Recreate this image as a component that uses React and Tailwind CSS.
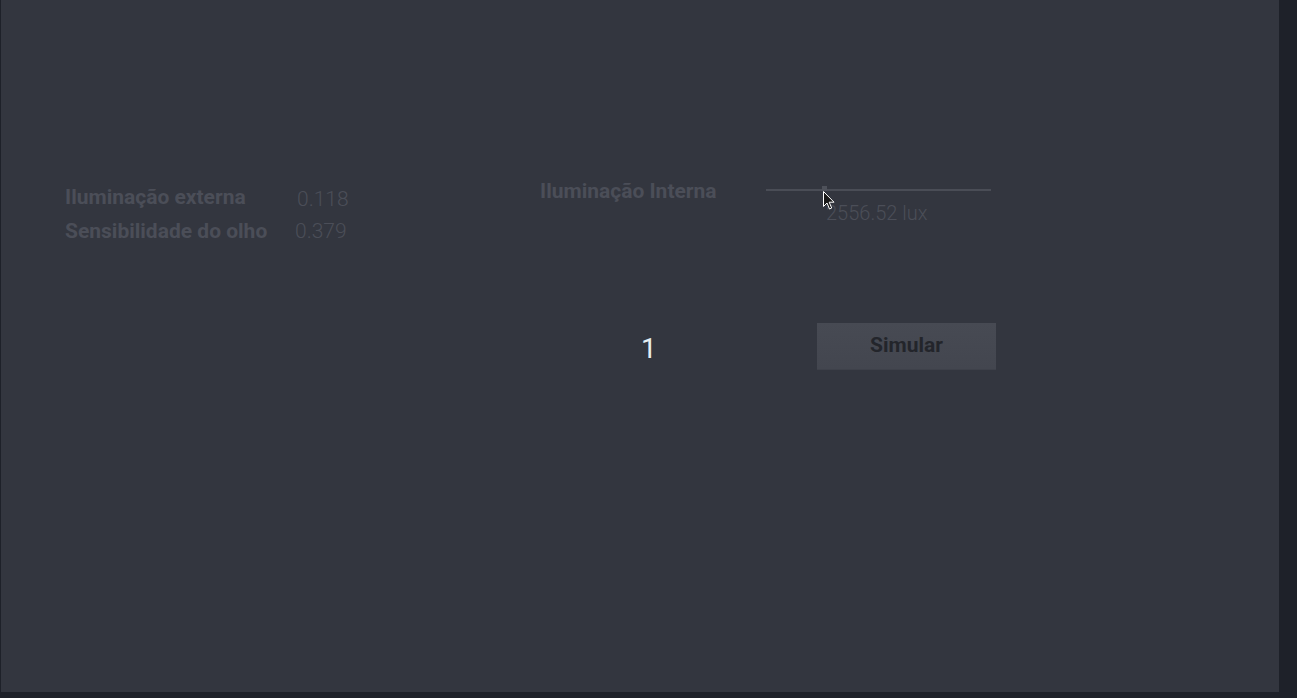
export default function App() {
    return (
        <div className="w-full h-[698px] bg-[#1e2129] flex" style={{ fontFamily: 'Roboto, "Noto Sans", sans-serif' }}>
            <div className="relative ml-[1px] w-[1278px] h-[692px] bg-[#33363f] flex pt-[178px]">
                {/* Left: readings */}
                <div className="w-[539px] pl-[64px] pt-[6px]">
                    <div className="grid grid-cols-[230px_auto] gap-y-[6px]">
                        <span className="text-[21px] leading-[26px] font-bold text-[#4b4e58]">Iluminação externa</span>
                        <span className="text-[21px] leading-[26px] font-light text-[#4b4e58] ml-[2px] mt-[2px]">0.118</span>
                        <span className="text-[21px] leading-[26px] font-bold text-[#4b4e58]">Sensibilidade do olho</span>
                        <span className="text-[21px] leading-[26px] font-light text-[#4b4e58]">0.379</span>
                    </div>
                </div>

                {/* Right: control + action */}
                <div className="flex flex-col">
                    <div className="flex">
                        <span className="w-[226px] text-[21px] leading-[26px] font-bold text-[#4b4e58]">Iluminação Interna</span>
                        <div className="w-[225px] flex flex-col">
                            <div className="relative h-[23px]">
                                <div className="absolute left-0 right-0 top-[11px] h-[2px] bg-[#4a4d56]" />
                                <div className="absolute left-[56px] top-[8px] w-[5px] h-[5px] bg-[#4e515a]" />
                            </div>
                            <span className="pl-[60px] text-[20px] leading-[24px] font-light text-[#4b4e58]">2556.52 lux</span>
                        </div>
                    </div>

                    <div className="flex items-start mt-[98px]">
                        <span className="w-[277px] pl-[101px] mt-[10px] text-[28px] leading-[32px] text-[#e6eef2]">1</span>
                        <button className="w-[179px] h-[47px] bg-gradient-to-b from-[#474a53] to-[#43464f] border-b border-[#3e414a] text-[21px] font-bold text-[#23252b]">
                            Simular
                        </button>
                    </div>
                </div>

                {/* Mouse pointer */}
                <svg className="absolute left-[822px] top-[191px]" width="13" height="20" viewBox="0 0 13 20">
                    <path d="M0.5 0.5 L0.5 15.5 L4 12 L6.5 18 L8.7 17 L6.2 11.2 L11 11.2 Z" fill="#1a1a1a" stroke="#ffffff" strokeWidth="1" strokeLinejoin="round" />
                </svg>
            </div>
        </div>
    )
}
